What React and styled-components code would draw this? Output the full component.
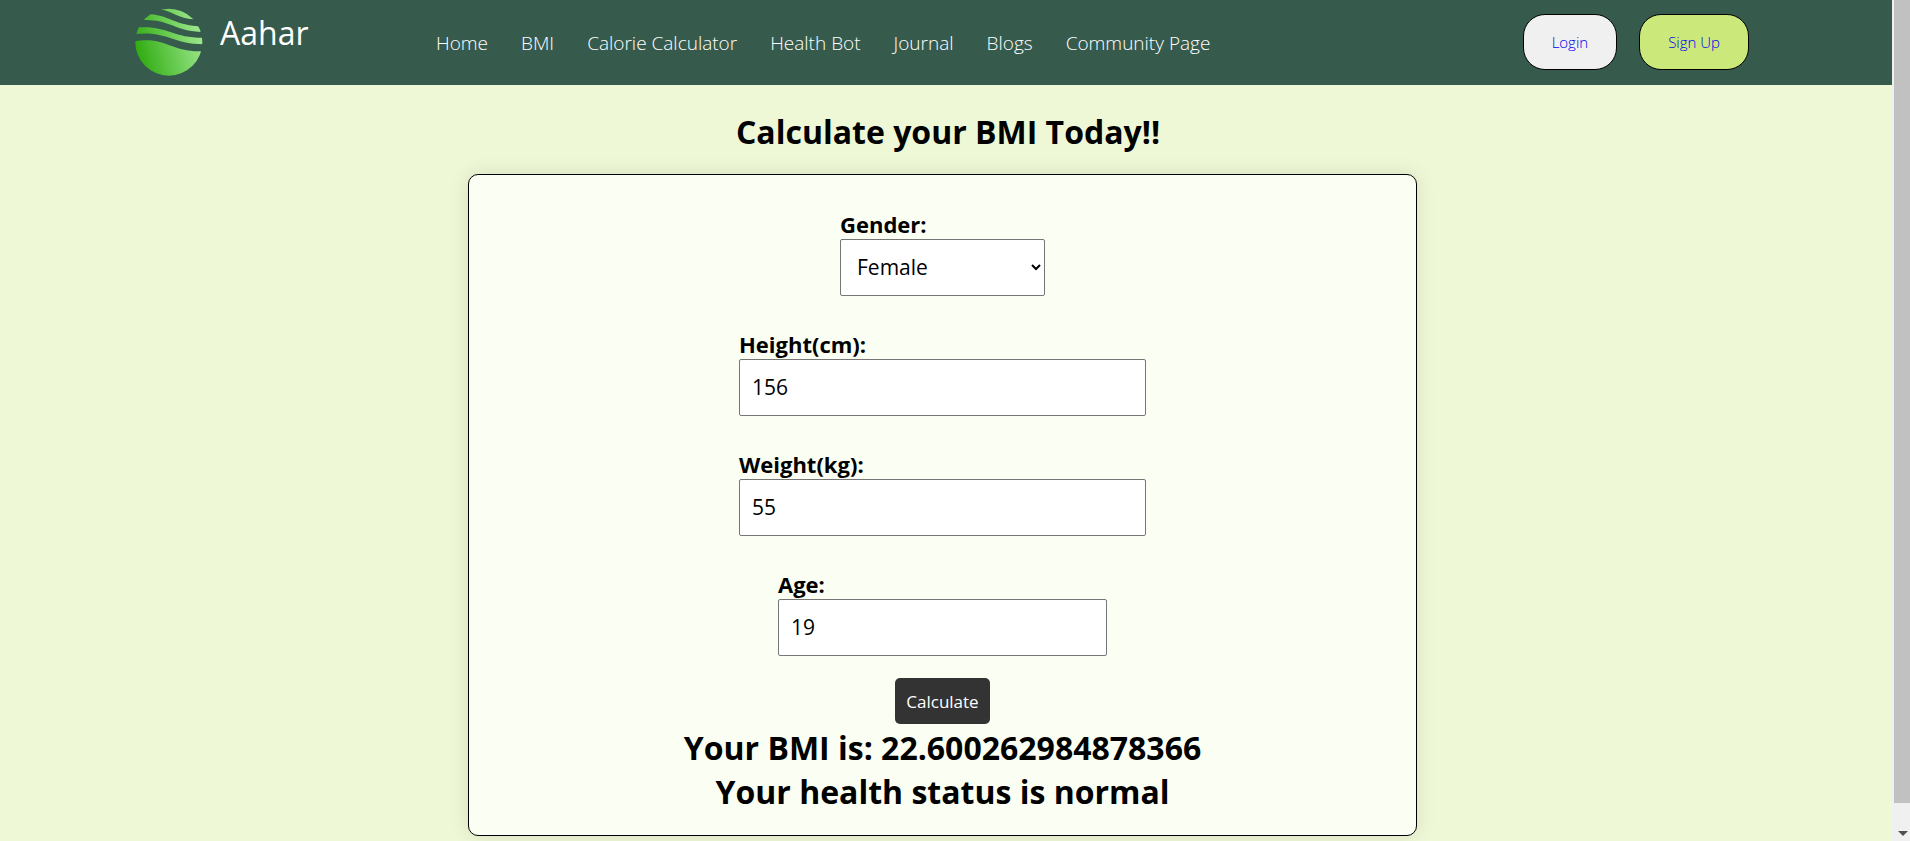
import React, { useState } from "react";
import styled, { createGlobalStyle } from "styled-components";

const GlobalStyle = createGlobalStyle`
  * { box-sizing: border-box; margin: 0; padding: 0; }
  body, button, input, select { font-family: "Open Sans", "Noto Sans", sans-serif; }
  body { background: #eef8d6; color: #000; }
`;

const Shell = styled.div`
  display: flex;
  height: 100vh;
  overflow: hidden;
`;

const Page = styled.div`
  flex: 1;
  min-width: 0;
  overflow-y: auto;
  scrollbar-width: none;
`;

const ScrollRail = styled.div`
  display: flex;
  flex-direction: column;
  justify-content: space-between;
  width: 18px;
  padding: 0 0 5px 2px;
  background: #f0f0f0;
`;

const ScrollThumb = styled.div`
  height: 96%;
  background: #c1c1c1;
`;

const ScrollArrow = styled.svg`
  display: block;
  width: 10px;
  height: 5px;
  margin-left: 4px;
  fill: #505050;
`;

const Header = styled.header`
  display: flex;
  align-items: center;
  height: 85px;
  padding: 0 143px 2px 135px;
  background: #365b4d;
`;

const Brand = styled.a`
  display: flex;
  align-items: flex-start;
  gap: 17px;
  width: 301px;
  color: #fff;
  font-size: 32px;
  line-height: 50px;
  text-decoration: none;
`;

const LogoMark = styled.svg`
  width: 68px;
  height: 68px;
`;

const Nav = styled.nav`
  display: flex;
  gap: 33px;
  padding-top: 2px;
`;

const NavLink = styled.a`
  color: #fff;
  font-size: 19px;
  font-weight: 300;
  line-height: 28px;
  text-decoration: none;
  white-space: nowrap;
`;

const Account = styled.div`
  display: flex;
  gap: 22px;
  margin-left: auto;
`;

const AccountButton = styled.button`
  height: 56px;
  padding: 0 28px;
  border: 1px solid #000;
  border-radius: 22px;
  background: ${({ $primary }) => ($primary ? "#cbe97b" : "#f0f0f0")};
  color: #0000ee;
  font-size: 15px;
  font-weight: 300;
`;

const Main = styled.main`
  display: flex;
  flex-direction: column;
  align-items: center;
`;

const Title = styled.h1`
  padding: 25px 0 20px 4px;
  font-size: 32px;
  line-height: 44px;
`;

const Card = styled.form`
  display: flex;
  flex-direction: column;
  align-items: center;
  width: calc(50% + 3px);
  margin-right: 7px;
  padding: 37px 0 21px;
  border: 1px solid #000;
  border-radius: 10px;
  background: #fbfff3;
  box-shadow: 0 0 20px rgba(0, 0, 0, 0.1);
`;

const Field = styled.div`
  display: flex;
  flex-direction: column;
  width: ${({ $width }) => $width}px;
  margin-bottom: ${({ $last }) => ($last ? 22 : 36)}px;
`;

const Label = styled.label`
  padding-bottom: 2px;
  font-size: 22px;
  font-weight: 700;
  line-height: 25px;
`;

const TextInput = styled.input`
  height: 57px;
  padding: 0 12px 1px;
  border: 1px solid #767676;
  border-radius: 2px;
  background: #fff;
  color: #000;
  font-size: 21px;
`;

const Select = styled.select`
  height: 57px;
  padding: 0 3px 1px 12px;
  border: 1px solid #767676;
  border-radius: 2px;
  background: #fff;
  color: #000;
  font-size: 21px;
`;

const CalculateButton = styled.button`
  height: 46px;
  margin-bottom: 2px;
  padding: 0 11px;
  border: 0;
  border-radius: 5px;
  background: #333;
  color: #fff;
  font-size: 17px;
`;

const Result = styled.h2`
  font-size: 32px;
  line-height: 44px;
`;

const links = ["Home", "BMI", "Calorie Calculator", "Health Bot", "Journal", "Blogs", "Community Page"];

function Logo() {
  return (
    <LogoMark viewBox="75 23 203 205" aria-hidden="true">
      <defs>
        <linearGradient id="leaf" x1="85" y1="160" x2="265" y2="110" gradientUnits="userSpaceOnUse">
          <stop offset="0" stopColor="#33ad14" />
          <stop offset="1" stopColor="#98e587" />
        </linearGradient>
        <clipPath id="disc">
          <circle cx="176" cy="126" r="101" />
        </clipPath>
      </defs>
      <g fill="url(#leaf)" clipPath="url(#disc)">
        <path d="M150 27C185 33 205 55 252 57V20H150Z" />
        <path d="M100 41C175 38 190 78 280 78V95C190 95 180 54 90 60Z" />
        <path d="M70 83C170 72 180 113 280 113V132C185 132 170 90 70 102Z" />
        <path d="M70 124C165 105 180 158 280 153V230H70Z" />
      </g>
    </LogoMark>
  );
}

export default function App() {
  const [gender, setGender] = useState("Female");
  const [height, setHeight] = useState("156");
  const [weight, setWeight] = useState("55");
  const [age, setAge] = useState("19");
  return (
    <>
      <GlobalStyle />
      <Shell>
        <Page>
          <Header>
            <Brand href="#"><Logo />Aahar</Brand>
            <Nav>
              {links.map((name) => <NavLink href="#" key={name}>{name}</NavLink>)}
            </Nav>
            <Account>
              <AccountButton type="button">Login</AccountButton>
              <AccountButton type="button" $primary>Sign Up</AccountButton>
            </Account>
          </Header>
          <Main>
            <Title>Calculate your BMI Today!!</Title>
            <Card onSubmit={(e) => e.preventDefault()}>
              <Field $width={205}>
                <Label htmlFor="gender">Gender:</Label>
                <Select id="gender" value={gender} onChange={(e) => setGender(e.target.value)}>
                  <option>Female</option>
                  <option>Male</option>
                </Select>
              </Field>
              <Field $width={407}>
                <Label htmlFor="height">Height(cm):</Label>
                <TextInput id="height" value={height} onChange={(e) => setHeight(e.target.value)} />
              </Field>
              <Field $width={407}>
                <Label htmlFor="weight">Weight(kg):</Label>
                <TextInput id="weight" value={weight} onChange={(e) => setWeight(e.target.value)} />
              </Field>
              <Field $width={329} $last>
                <Label htmlFor="age">Age:</Label>
                <TextInput id="age" value={age} onChange={(e) => setAge(e.target.value)} />
              </Field>
              <CalculateButton type="submit">Calculate</CalculateButton>
              <Result>Your BMI is: 22.600262984878366</Result>
              <Result>Your health status is normal</Result>
            </Card>
          </Main>
        </Page>
        <ScrollRail aria-hidden="true">
          <ScrollThumb />
          <ScrollArrow viewBox="0 0 10 5"><path d="M0 0H10L5 5Z" /></ScrollArrow>
        </ScrollRail>
      </Shell>
    </>
  );
}
